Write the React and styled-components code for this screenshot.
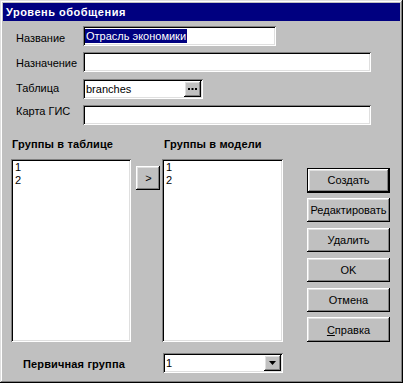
import React from 'react';
import styled, { createGlobalStyle, css } from 'styled-components';

const GlobalStyle = createGlobalStyle`
  html, body {
    margin: 0;
    padding: 0;
    background: #c0c0c0;
  }
  body {
    font-family: "Liberation Sans", Arial, sans-serif;
    font-size: 11px;
    color: #000;
  }
`;

const raised = css`
  background: #c0c0c0;
  box-shadow: inset -1px -1px #000, inset 1px 1px #fff, inset -2px -2px #808080, inset 2px 2px #dfdfdf;
`;

const sunken = css`
  background: #fff;
  box-shadow: inset 1px 1px #808080, inset -1px -1px #fff, inset 2px 2px #000, inset -2px -2px #dfdfdf;
`;

const Window = styled.div`
  width: 403px;
  height: 383px;
  box-sizing: border-box;
  padding: 3px;
  background: #c0c0c0;
  box-shadow: inset -1px -1px #000, inset 1px 1px #dfdfdf, inset -2px -2px #808080, inset 2px 2px #fff;
  display: flex;
  flex-direction: column;
`;

const TitleBar = styled.div`
  height: 18px;
  flex: none;
  background: #000080;
  color: #fff;
  font-weight: bold;
  letter-spacing: 0.5px;
  padding-left: 3px;
  display: flex;
  align-items: center;
`;

const Body = styled.div`
  padding: 5px 0 0 8px;
`;

const Form = styled.div`
  display: grid;
  grid-template-columns: 67px auto;
  grid-auto-rows: 20px;
  row-gap: 6.33px;
  padding-left: 5px;
`;

const Label = styled.div`
  line-height: 13px;
  margin-top: ${({ $dy }) => $dy}px;
  white-space: nowrap;
`;

const Field = styled.div`
  ${sunken};
  width: ${({ $w }) => $w}px;
  height: 20px;
  box-sizing: border-box;
  padding: 2px 2px 2px 3px;
  display: flex;
  align-items: center;
  white-space: nowrap;
  overflow: hidden;
`;

const Selected = styled.span`
  background: #000080;
  color: #fff;
  line-height: 14px;
  padding: 0 1px;
  margin-left: -1px;
`;

const InnerButton = styled.div`
  ${raised};
  margin-left: auto;
  width: 17px;
  align-self: stretch;
  flex: none;
  display: flex;
  align-items: center;
  justify-content: center;
`;

const Lower = styled.div`
  display: grid;
  grid-template-columns: 120px 31px 121px 1fr;
  grid-template-rows: 13px 183px 20px;
  row-gap: 8px;
  margin-top: 13px;
`;

const GroupLabel = styled.div`
  font-weight: bold;
  line-height: 13px;
  letter-spacing: 0.15px;
  padding-left: ${({ $pl }) => $pl}px;
  white-space: nowrap;
`;

const List = styled.div`
  ${sunken};
  box-sizing: border-box;
  padding: 2px 2px 2px 4px;
  line-height: 13px;
`;

const ArrowCell = styled.div`
  padding: 7px 0 0 5px;
`;

const SmallButton = styled.div`
  ${raised};
  width: 24px;
  height: 24px;
  display: flex;
  align-items: center;
  justify-content: center;
  padding-left: 1px;
  box-sizing: border-box;
`;

const ButtonColumn = styled.div`
  display: flex;
  flex-direction: column;
  gap: 5.3px;
  padding: 9px 0 0 24px;
`;

const Button = styled.div`
  ${raised};
  width: 83px;
  height: 25px;
  box-sizing: border-box;
  display: flex;
  align-items: center;
  justify-content: center;
  white-space: nowrap;
  ${({ $default }) => $default && css`
    border: 1px solid #000;
  `}
`;

const BottomRow = styled.div`
  grid-column: 1 / 3;
  display: flex;
  align-items: center;
  padding: 8px 0 0 12px;
  font-weight: bold;
  letter-spacing: 0.15px;
`;

const ComboCell = styled.div`
  padding-left: 1px;
  margin-top: 3px;
`;

const Dots = () => (
  <svg width="9" height="2" viewBox="0 0 9 2">
    <rect x="0" y="0" width="2" height="2" fill="#000" />
    <rect x="3.5" y="0" width="2" height="2" fill="#000" />
    <rect x="7" y="0" width="2" height="2" fill="#000" />
  </svg>
);

const DownArrow = () => (
  <svg width="7" height="4" viewBox="0 0 7 4">
    <path d="M0 0h7L3.5 4z" fill="#000" />
  </svg>
);

const App = () => {
  const tableGroups = ['1', '2'];
  const modelGroups = ['1', '2'];
  const actions = ['Создать', 'Редактировать', 'Удалить', 'OK', 'Отмена'];

  return (
    <>
      <GlobalStyle />
      <Window>
        <TitleBar>Уровень обобщения</TitleBar>
        <Body>
          <Form>
            <Label $dy={6}>Название</Label>
            <Field $w={193}>
              <Selected>Отрасль экономики</Selected>
            </Field>
            <Label $dy={5}>Назначение</Label>
            <Field $w={288} />
            <Label $dy={3}>Таблица</Label>
            <Field $w={120}>
              branches
              <InnerButton>
                <Dots />
              </InnerButton>
            </Field>
            <Label $dy={0}>Карта ГИС</Label>
            <Field $w={288} />
          </Form>

          <Lower>
            <GroupLabel $pl={1}>Группы в таблице</GroupLabel>
            <div />
            <GroupLabel $pl={2}>Группы в модели</GroupLabel>
            <div />

            <List>
              {tableGroups.map((g) => (
                <div key={g}>{g}</div>
              ))}
            </List>
            <ArrowCell>
              <SmallButton>&gt;</SmallButton>
            </ArrowCell>
            <List>
              {modelGroups.map((g) => (
                <div key={g}>{g}</div>
              ))}
            </List>
            <ButtonColumn>
              {actions.map((a, i) => (
                <Button key={a} $default={i === 0}>
                  {a}
                </Button>
              ))}
              <Button>
                <u>С</u>правка
              </Button>
            </ButtonColumn>

            <BottomRow>Первичная группа</BottomRow>
            <ComboCell>
              <Field $w={120}>
                1
                <InnerButton>
                  <DownArrow />
                </InnerButton>
              </Field>
            </ComboCell>
          </Lower>
        </Body>
      </Window>
    </>
  );
};

export default App;
